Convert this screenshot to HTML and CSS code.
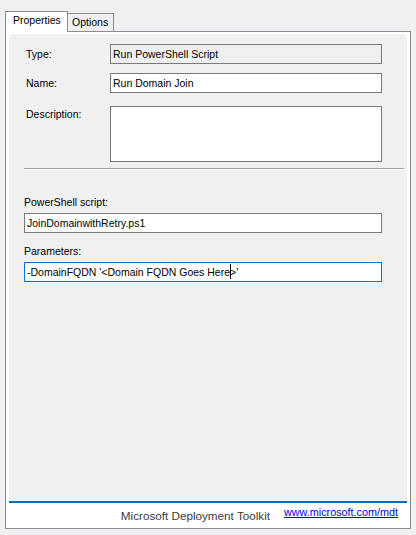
FILE: index.html
```html
<!DOCTYPE html>
<html>
<head>
<meta charset="utf-8">
<link rel="stylesheet" href="styles.css">
</head>
<body>
<div class="window">
  <div class="tabs">
    <div class="tab active">Properties</div>
    <div class="tab">Options</div>
  </div>
  <div class="panel">
    <div class="content">
      <div class="row row-type">
        <div class="lbl">Type:</div>
        <div class="box readonly">Run PowerShell Script</div>
      </div>
      <div class="row row-name">
        <div class="lbl">Name:</div>
        <div class="box">Run Domain Join</div>
      </div>
      <div class="row">
        <div class="lbl lbl-top">Description:</div>
        <div class="box area"></div>
      </div>
      <div class="sep"></div>
      <div class="stack-label first">PowerShell script:</div>
      <div class="box wide">JoinDomainwithRetry.ps1</div>
      <div class="stack-label">Parameters:</div>
      <div class="box wide focus">-DomainFQDN '&lt;Domain FQDN Goes Here<span class="caret"></span>&gt;'</div>
    </div>
    <div class="footer">
      <span class="brand">Microsoft Deployment Toolkit</span>
      <a class="link" href="#">www.microsoft.com/mdt</a>
    </div>
  </div>
</div>
</body>
</html>
```
FILE: styles.css
```css
html, body {
  margin: 0;
  background: #f0f0f0;
}
body {
  font-family: "Liberation Sans", Arial, sans-serif;
  font-size: 10.5px;
  color: #000;
}
.window {
  padding: 11px 0 0 5px;
}
.tabs {
  display: flex;
  align-items: flex-end;
}
.tab {
  box-sizing: border-box;
  border: 1px solid #898c95;
  border-bottom: none;
  background: #f0f0f0;
  height: 18px;
  width: 47px;
  padding: 2px 0 0 4px;
  line-height: 13px;
  margin-left: -1px;
}
.tab.active {
  background: #fff;
  height: 21px;
  width: 63px;
  padding: 2px 0 0 7px;
  margin-left: 0;
  margin-bottom: -1px;
  position: relative;
  z-index: 1;
}
.panel {
  box-sizing: border-box;
  width: 406px;
  height: 498px;
  border: 1px solid #898c95;
  background: #fff;
  padding: 2px 3px 0;
  display: flex;
  flex-direction: column;
}
.content {
  box-sizing: border-box;
  height: 469px;
  background: #f0f0f0;
  border-bottom: 2px solid #0072c6;
  padding: 10px 3px 0 15px;
}
.row {
  display: flex;
  align-items: flex-start;
}
.row-type { margin-bottom: 9px; }
.row-name { margin-bottom: 13px; }
.lbl {
  width: 84px;
  padding-left: 2px;
  line-height: 20px;
}
.lbl-top {
  line-height: 16px;
}
.box {
  box-sizing: border-box;
  width: 272px;
  height: 20px;
  border: 1px solid #7a7a7a;
  background: #fff;
  padding: 0 2px;
  line-height: 18px;
  white-space: nowrap;
  overflow: hidden;
}
.readonly {
  background: #f0f0f0;
}
.area {
  height: 56px;
}
.sep {
  margin-top: 6px;
  height: 0;
  border-top: 1px solid #a0a0a0;
  border-bottom: 1px solid #fff;
}
.stack-label {
  line-height: 13px;
  margin-top: 12px;
  margin-bottom: 4px;
}
.stack-label.first {
  margin-top: 26px;
}
.wide {
  width: 358px;
}
.focus {
  border-color: #0078d7;
}
.caret {
  display: inline-block;
  width: 0;
  height: 15px;
  border-left: 1px solid #000;
  vertical-align: -3px;
  margin-right: -1px;
}
.footer {
  height: 25px;
  display: flex;
  justify-content: flex-end;
  align-items: flex-start;
  padding: 3px 9px 0 0;
  box-sizing: border-box;
}
.brand {
  font-size: 11.7px;
  line-height: 13px;
  color: #3c3c3c;
  margin-top: 3px;
  margin-right: 14px;
}
.link {
  font-size: 10.8px;
  line-height: 13px;
  color: #0000ff;
  text-decoration: underline;
}
```
